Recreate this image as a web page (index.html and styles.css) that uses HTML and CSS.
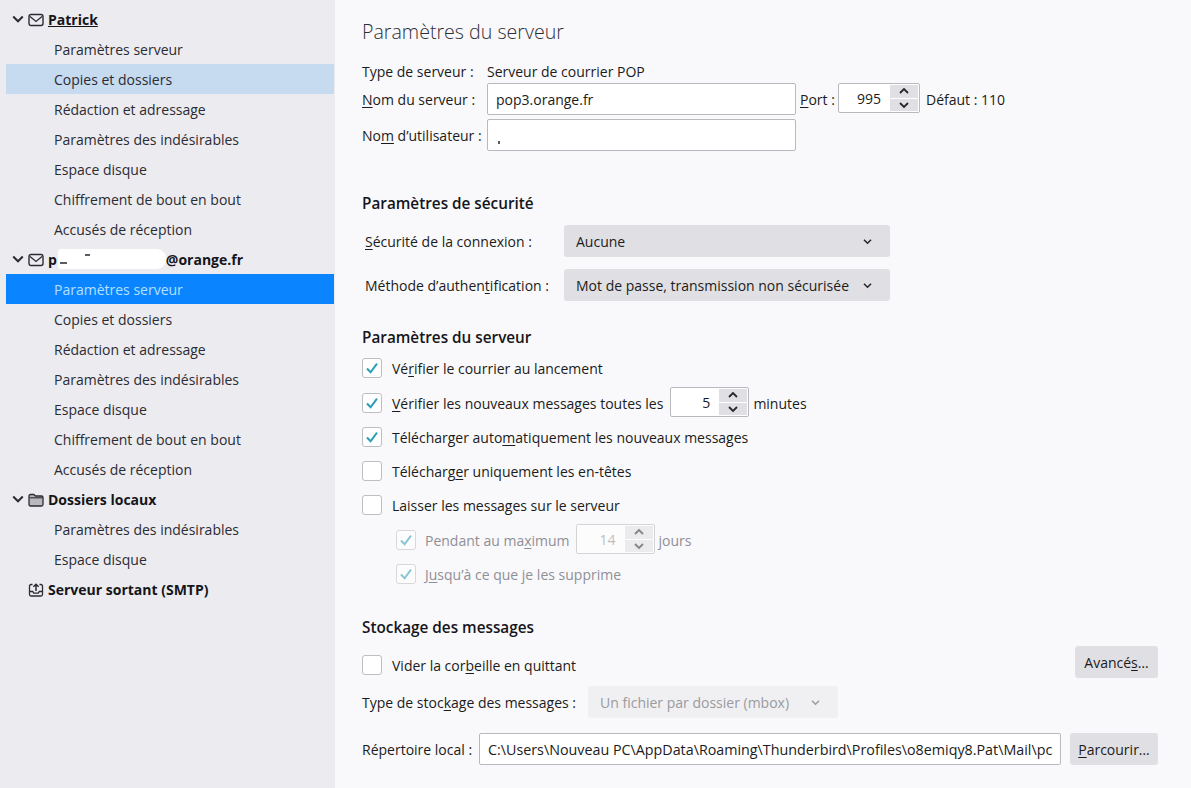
FILE: index.html
```html
<!DOCTYPE html>
<html lang="fr">
<head>
  <meta charset="UTF-8">
  <title>Paramètres du serveur</title>
  <link rel="stylesheet" href="styles.css">
</head>
<body>
  <svg class="defs" width="0" height="0">
    <symbol id="twisty" viewBox="0 0 12 12"><path d="M1.2 3.5L6 8.3l4.8-4.8" fill="none" stroke="#2b2b33" stroke-width="2"/></symbol>
    <symbol id="mail" viewBox="0 0 16 14"><rect x="1" y="1.5" width="14" height="11" rx="2" fill="none" stroke="#2b2b33" stroke-width="1.4"/><path d="M2 3.5l6 5 6-5" fill="none" stroke="#2b2b33" stroke-width="1.3"/></symbol>
    <symbol id="folder" viewBox="0 0 16 14"><path d="M1 3a1.5 1.5 0 0 1 1.5-1.5h3.3L7.5 3h6A1.5 1.5 0 0 1 15 4.5v7a1.5 1.5 0 0 1-1.5 1.5h-11A1.5 1.5 0 0 1 1 11.5z" fill="#b9b9bd" stroke="#2b2b33" stroke-width="1.3"/><path d="M1.5 4.8h13" stroke="#2b2b33" stroke-width="1.1"/></symbol>
    <symbol id="outbox" viewBox="0 0 16 14"><path d="M4.5 1.5H3A1.5 1.5 0 0 0 1.5 3v8.5A1.5 1.5 0 0 0 3 13h10a1.5 1.5 0 0 0 1.5-1.5V3A1.5 1.5 0 0 0 13 1.5h-1.5M1.5 8.5h3.2l1 1.7h4.6l1-1.700h3.200" fill="none" stroke="#2b2b33" stroke-width="1.3"/><path d="M8 8V1.500M5.400 3.800L8 1.200l2.600 2.600" fill="none" stroke="#2b2b33" stroke-width="1.5"/></symbol>
    <symbol id="check" viewBox="0 0 20 20"><path d="M5 10.5l3.6 3.8L15 5.6" fill="none" stroke="#2a9db8" stroke-width="2"/></symbol>
    <symbol id="up" viewBox="0 0 10 8"><path d="M1 6l4-4 4 4" fill="none" stroke="#26262c" stroke-width="1.8"/></symbol>
    <symbol id="down" viewBox="0 0 10 8"><path d="M1 2l4 4 4-4" fill="none" stroke="#26262c" stroke-width="1.8"/></symbol>
  </svg>

  <div class="app">
    <nav class="sidebar">
      <div class="account"><svg class="twisty"><use href="#twisty"/></svg><svg class="acc-icon"><use href="#mail"/></svg><span class="acc-name current">Patrick</span></div>
      <div class="item">Paramètres serveur</div>
      <div class="item hover">Copies et dossiers</div>
      <div class="item">Rédaction et adressage</div>
      <div class="item">Paramètres des indésirables</div>
      <div class="item">Espace disque</div>
      <div class="item">Chiffrement de bout en bout</div>
      <div class="item">Accusés de réception</div>

      <div class="account"><svg class="twisty"><use href="#twisty"/></svg><svg class="acc-icon"><use href="#mail"/></svg><span class="acc-name">p<span class="blot"><i class="scratch scratch-a"></i><i class="scratch scratch-b"></i></span>@orange.fr</span></div>
      <div class="item selected">Paramètres serveur</div>
      <div class="item">Copies et dossiers</div>
      <div class="item">Rédaction et adressage</div>
      <div class="item">Paramètres des indésirables</div>
      <div class="item">Espace disque</div>
      <div class="item">Chiffrement de bout en bout</div>
      <div class="item">Accusés de réception</div>

      <div class="account"><svg class="twisty"><use href="#twisty"/></svg><svg class="acc-icon"><use href="#folder"/></svg><span class="acc-name">Dossiers locaux</span></div>
      <div class="item">Paramètres des indésirables</div>
      <div class="item">Espace disque</div>

      <div class="account"><span class="no-twisty"></span><svg class="acc-icon"><use href="#outbox"/></svg><span class="acc-name">Serveur sortant (SMTP)</span></div>
    </nav>

    <main class="content">
      <h1 class="page-title">Paramètres du serveur</h1>

      <div class="row text-row mt-14"><span class="label-server">Type de serveur :</span><span>Serveur de courrier POP</span></div>
      <div class="row field-row mt-2">
        <span class="label-server"><u>N</u>om du serveur :</span>
        <div class="field field-server">pop3.orange.fr</div>
        <span class="label-port"><u>P</u>ort :</span>
        <div class="spin spin-port"><span class="spin-value">995</span><span class="spin-btns"><span class="spin-btn"><svg><use href="#up"/></svg></span><span class="spin-btn"><svg><use href="#down"/></svg></span></span></div>
        <span class="after-port">Défaut : 110</span>
      </div>
      <div class="row field-row mt-4">
        <span class="label-server">No<u>m</u> d’utilisateur :</span>
        <div class="field field-server"><i class="scratch scratch-user"></i></div>
      </div>

      <h2 class="section mt-42">Paramètres de sécurité</h2>
      <div class="row field-row mt-12">
        <span class="label-security"><u>S</u>écurité de la connexion :</span>
        <div class="select select-security">Aucune<svg class="select-arrow"><use href="#down"/></svg></div>
      </div>
      <div class="row field-row mt-12">
        <span class="label-security">Méthode d’authen<u>t</u>ification :</span>
        <div class="select select-security">Mot de passe, transmission non sécurisée<svg class="select-arrow"><use href="#down"/></svg></div>
      </div>

      <h2 class="section mt-26">Paramètres du serveur</h2>
      <div class="row check-row mt-9"><span class="checkbox"><svg><use href="#check"/></svg></span>Vé<u>r</u>ifier le courrier au lancement</div>
      <div class="row field-row mt-7">
        <span class="checkbox"><svg><use href="#check"/></svg></span><span><u>V</u>érifier les nouveaux messages toutes les</span>
        <div class="spin spin-small"><span class="spin-value">5</span><span class="spin-btns"><span class="spin-btn"><svg><use href="#up"/></svg></span><span class="spin-btn"><svg><use href="#down"/></svg></span></span></div>
        <span class="after-small">minutes</span>
      </div>
      <div class="row check-row mt-6"><span class="checkbox"><svg><use href="#check"/></svg></span>Télécharger auto<u>m</u>atiquement les nouveaux messages</div>
      <div class="row check-row mt-10"><span class="checkbox"></span>Télécharg<u>e</u>r uniquement les en-têtes</div>
      <div class="row check-row mt-10"><span class="checkbox"></span>Laisser les messa<u>g</u>es sur le serveur</div>
      <div class="row field-row nested disabled mt-7">
        <span class="checkbox"><svg><use href="#check"/></svg></span><span>Pendant au ma<u>x</u>imum</span>
        <div class="spin spin-small"><span class="spin-value">14</span><span class="spin-btns"><span class="spin-btn"><svg><use href="#up"/></svg></span><span class="spin-btn"><svg><use href="#down"/></svg></span></span></div>
        <span class="after-small">jours</span>
      </div>
      <div class="row check-row nested disabled mt-6"><span class="checkbox"><svg><use href="#check"/></svg></span>J<u>u</u>squ’à ce que je les supprime</div>

      <h2 class="section mt-31">Stockage des messages</h2>
      <div class="row trash-row mt-9">
        <div class="row check-row"><span class="checkbox"></span>Vider la cor<u>b</u>eille en quittant</div>
        <button class="btn btn-advanced">Avancé<u>s</u>…</button>
      </div>
      <div class="row field-row mt-8">
        <span class="label-store">Type de stoc<u>k</u>age des messages :</span>
        <div class="select select-store">Un fichier par dossier (mbox)<svg class="select-arrow"><use href="#down"/></svg></div>
      </div>
      <div class="row field-row mt-15">
        <span class="label-dir">Répertoire local :</span>
        <div class="field field-dir">C:\Users\Nouveau PC\AppData\Roaming\Thunderbird\Profiles\o8emiqy8.Pat\Mail\pc</div>
        <button class="btn btn-browse"><u>P</u>arcourir…</button>
      </div>
    </main>
  </div>
</body>
</html>
```

FILE: styles.css
```css
html, body {
  margin: 0;
  height: 100%;
  overflow: hidden;
}

body {
  font-family: "Open Sans", "Noto Sans", sans-serif;
  font-size: 14px;
  color: #1b1b20;
  background: #f9f9fb;
}

u {
  text-underline-offset: 2px;
}

.defs {
  position: absolute;
}

.app {
  display: flex;
  height: 788px;
}

/* left tree */
.sidebar {
  width: 328px;
  padding: 4px 1px 0 6px;
  background: #ececf0;
  flex: none;
}

.account, .item {
  height: 30px;
  display: flex;
  align-items: center;
}

.account {
  font-weight: 700;
  color: #15151a;
}

.twisty {
  width: 12px;
  height: 12px;
  margin-left: 6px;
  flex: none;
}

.no-twisty {
  width: 18px;
  flex: none;
}

.acc-icon {
  width: 16px;
  height: 14px;
  margin: 1px 4px 0 4px;
  flex: none;
}

.acc-name {
  display: flex;
  align-items: center;
}

.current {
  text-decoration: underline;
}

.blot {
  position: relative;
  width: 108px;
  height: 20px;
  margin-left: 1px;
  background: #fff;
  border-radius: 3px 9px 9px 3px;
}

.scratch {
  position: absolute;
  background: #5a5a62;
}

.scratch-a {
  left: 2px;
  top: 13px;
  width: 7px;
  height: 2px;
}

.scratch-b {
  left: 27px;
  top: 5px;
  width: 5px;
  height: 2px;
}

.item {
  padding-left: 48px;
  color: #2b2b33;
}

.item.hover {
  background: #c6daf0;
}

.item.selected {
  background: #0a84ff;
  color: #b4e0ff;
}

/* right panel */
.content {
  flex: 1;
  padding: 0 33px 0 27px;
}

.page-title {
  margin: 17px 0 0;
  height: 30px;
  line-height: 30px;
  font-size: 19.6px;
  font-weight: 300;
  color: #2e2e36;
}

.section {
  margin-bottom: 0;
  height: 20px;
  line-height: 20px;
  font-size: 15.3px;
  font-weight: 600;
  color: #15151a;
}

.row {
  display: flex;
  align-items: center;
}

.text-row {
  height: 20px;
}

.field-row {
  height: 32px;
}

.check-row {
  height: 24px;
}

.label-server {
  width: 125px;
  flex: none;
}

.label-port {
  width: 38px;
  margin-left: 4px;
}

.label-security {
  width: 199px;
  padding-left: 3px;
}

.label-store {
  width: 226px;
}

.label-dir {
  width: 117px;
}

.field {
  position: relative;
  height: 32px;
  box-sizing: border-box;
  border: 1px solid #b8b8be;
  border-radius: 2px;
  background: #fff;
  padding-left: 8px;
  display: flex;
  align-items: center;
  white-space: nowrap;
  overflow: hidden;
}

.field-server {
  width: 309px;
}

.field-dir {
  width: 582px;
  font-size: 14.3px;
}

.scratch-user {
  left: 10px;
  top: 21px;
  width: 2px;
  height: 3px;
}

.spin {
  height: 30px;
  align-self: flex-start;
  box-sizing: border-box;
  border: 1px solid #b8b8be;
  border-radius: 2px;
  background: #fff;
  display: flex;
  justify-content: flex-end;
}

.spin-port {
  width: 82px;
}

.spin-small {
  width: 79px;
  margin-left: 7px;
}

.spin-value {
  align-self: center;
  margin-right: 9px;
}

.spin-btns {
  width: 28px;
  padding: 1px 1px 1px 0;
  display: flex;
  flex-direction: column;
  gap: 1px;
}

.spin-btn {
  flex: 1;
  background: #e0e0e4;
  display: flex;
  align-items: center;
  justify-content: center;
}

.spin-btn svg {
  width: 10px;
  height: 8px;
}

.after-port {
  margin-left: 6px;
}

.after-small {
  margin-left: 4px;
}

.checkbox {
  width: 20px;
  height: 20px;
  box-sizing: border-box;
  border: 1px solid #bdbdc3;
  border-radius: 3px;
  background: #fff;
  margin-right: 10px;
  flex: none;
  display: flex;
  align-items: center;
  justify-content: center;
}

.checkbox svg {
  width: 20px;
  height: 20px;
  flex: none;
}

.nested {
  padding-left: 34px;
}

.nested .checkbox {
  margin-right: 9px;
}

.nested .spin-small {
  margin-left: 6px;
}

.disabled {
  color: #8f8f96;
}

.disabled .checkbox, .disabled .spin {
  opacity: 0.55;
}

.select {
  height: 32px;
  box-sizing: border-box;
  background: #e0e0e4;
  border-radius: 3px;
  padding: 0 18px 0 12px;
  display: flex;
  align-items: center;
  justify-content: space-between;
  white-space: nowrap;
}

.select-security {
  width: 326px;
}

.select-store {
  width: 250px;
  background: #f0f0f2;
  color: #9a9aa0;
}

.select-arrow {
  width: 9px;
  height: 7px;
  flex: none;
}

.select-store .select-arrow {
  opacity: 0.4;
}

.btn {
  height: 32px;
  box-sizing: border-box;
  border: none;
  border-radius: 3px;
  background: #e0e0e4;
  color: #1b1b20;
  font: inherit;
  padding: 0;
}

.trash-row {
  height: 32px;
  justify-content: space-between;
  align-items: flex-start;
}

.trash-row .check-row {
  margin-top: 7px;
}

.btn-advanced {
  width: 83px;
}

.btn-browse {
  width: 88px;
  margin-left: 9px;
}

/* vertical rhythm */
.mt-2 { margin-top: 2px; }
.mt-4 { margin-top: 4px; }
.mt-6 { margin-top: 6px; }
.mt-7 { margin-top: 7px; }
.mt-8 { margin-top: 8px; }
.mt-9 { margin-top: 9px; }
.mt-10 { margin-top: 10px; }
.mt-12 { margin-top: 12px; }
.mt-14 { margin-top: 14px; }
.mt-15 { margin-top: 15px; }
.mt-26 { margin-top: 26px; }
.mt-31 { margin-top: 31px; }
.mt-42 { margin-top: 42px; }
```
